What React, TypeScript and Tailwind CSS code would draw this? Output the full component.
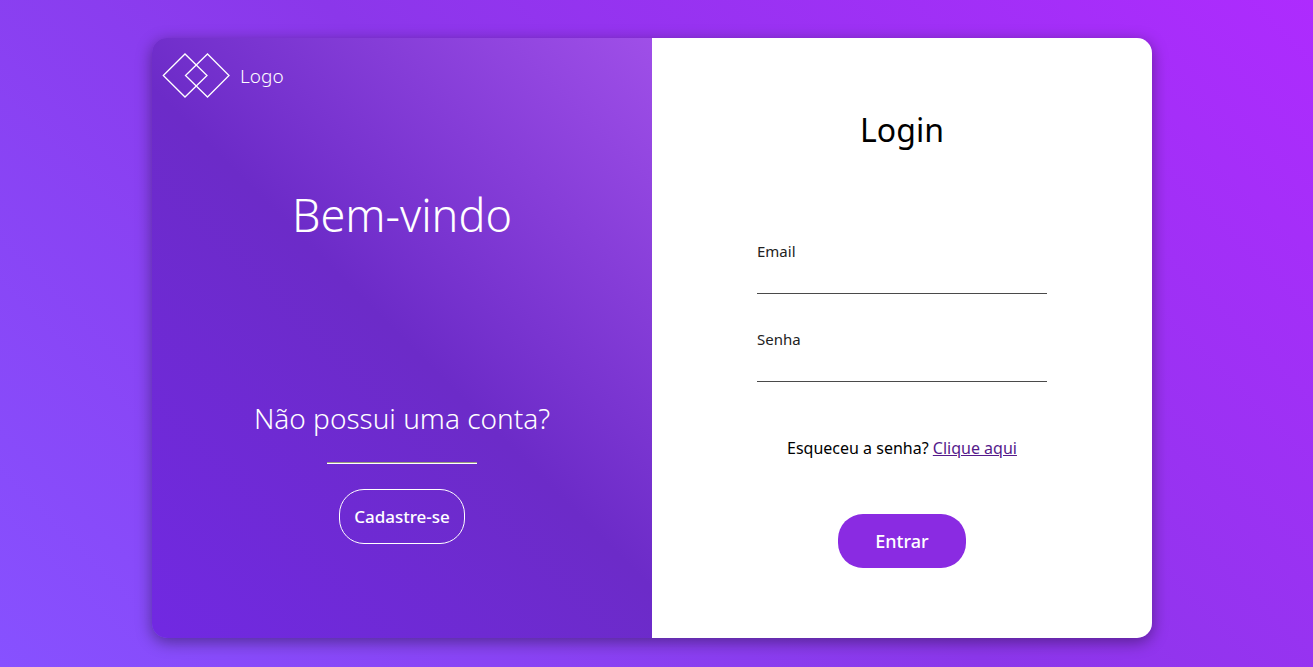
import React from "react";

function Logo() {
  return (
    <div className="flex items-center gap-2 px-2.5 pt-3.5">
      <svg width="70" height="46" viewBox="0 0 70 46" fill="none" stroke="#fff" strokeWidth="1.3" aria-hidden="true">
        <path d="M1.3 23.5 23 2l22 21.5L23 45z" />
        <path d="M23.5 23.5 45.5 2 67 23.5 45.5 45z" />
      </svg>
      <span className="pt-0.5 text-[19px] font-light">Logo</span>
    </div>
  );
}

function Field({ id, label, type }: { id: string; label: string; type: string }) {
  return (
    <div className="flex flex-col">
      <label htmlFor={id} className="text-[15px] leading-5 text-[#222]">
        {label}
      </label>
      <input
        id={id}
        type={type}
        className="h-[33px] w-full border-b border-[#4a4a4a] bg-transparent text-base outline-none"
      />
    </div>
  );
}

export default function App() {
  return (
    <div className="min-h-screen bg-[linear-gradient(45deg,#8751ff,#8b37ea_50%,#ae2bfe)] pt-[38px] pr-[9px] pb-7 font-['Noto_Sans',sans-serif]">
      <main className="mx-auto grid max-w-[1000px] grid-cols-2 overflow-hidden rounded-[15px] shadow-[0_4px_16px_rgba(0,0,0,0.4)]">
        <section className="flex flex-col bg-[linear-gradient(45deg,#7129e2,#6c2bc8_50%,#9f4fe8)] pb-[94px] text-white">
          <Logo />
          <div className="flex flex-col items-center">
            <h1 className="mt-[85px] text-[45px] leading-16 font-light">Bem-vindo</h1>
            <h2 className="mt-[151px] text-[28px] leading-10 font-light">Não possui uma conta?</h2>
            <hr className="mt-6 h-0.5 w-[150px] border-t border-b border-t-[#9a9a80] border-b-white" />
            <button
              type="button"
              className="mt-[25px] h-[55px] w-[126px] rounded-[25px] border border-white text-[17px] font-medium"
            >
              Cadastre-se
            </button>
          </div>
        </section>
        <section className="flex flex-col items-center bg-white pb-[70px] text-black">
          <h2 className="mt-[68px] text-[32px] leading-12">Login</h2>
          <form id="login" className="mt-[87px] flex w-[290px] flex-col gap-[35px]">
            <Field id="email" label="Email" type="email" />
            <Field id="senha" label="Senha" type="password" />
          </form>
          <p className="mt-[54px] text-base leading-6">
            Esqueceu a senha?{" "}
            <a href="#recuperar" className="text-[#551a8b] underline">
              Clique aqui
            </a>
          </p>
          <button
            type="submit"
            form="login"
            className="mt-[54px] h-[54px] w-32 rounded-[25px] bg-[#8a2be2] text-lg font-medium text-white"
          >
            Entrar
          </button>
        </section>
      </main>
    </div>
  );
}
